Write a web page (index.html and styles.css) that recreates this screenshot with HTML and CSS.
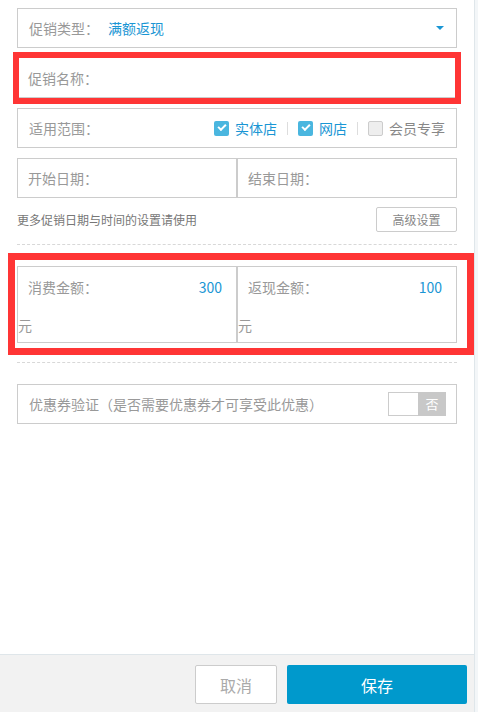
FILE: index.html
```html
<!DOCTYPE html>
<html lang="zh-CN">
<head>
	<meta charset="UTF-8">
	<title>满额返现</title>
	<link rel="stylesheet" href="styles.css">
</head>
<body>
	<div class="panel">
		<div class="form">
			<div class="field select">
				<span class="label">促销类型：</span>
				<span class="value">满额返现</span>
				<i class="caret"></i>
			</div>
			<div class="mark mark-name">
				<div class="field field-in">
					<span class="label">促销名称：</span>
				</div>
			</div>
			<div class="field">
				<span class="label">适用范围：</span>
				<div class="checks">
					<span class="check on"><i class="box"></i>实体店</span>
					<span class="sep"></span>
					<span class="check on"><i class="box"></i>网店</span>
					<span class="sep"></span>
					<span class="check"><i class="box"></i>会员专享</span>
				</div>
			</div>
			<div class="field split">
				<div class="cell"><span class="label">开始日期：</span></div>
				<div class="cell"><span class="label">结束日期：</span></div>
			</div>
			<div class="hint">
				<span>更多促销日期与时间的设置请使用</span>
				<button class="btn-small">高级设置</button>
			</div>
			<div class="dash"></div>
			<div class="mark mark-money">
				<div class="field split money">
					<div class="cell">
						<div class="row"><span class="label">消费金额：</span><span class="num">300</span></div>
						<div class="unit">元</div>
					</div>
					<div class="cell">
						<div class="row"><span class="label">返现金额：</span><span class="num">100</span></div>
						<div class="unit">元</div>
					</div>
				</div>
			</div>
			<div class="dash"></div>
			<div class="field coupon">
				<span class="label">优惠券验证（是否需要优惠券才可享受此优惠）</span>
				<div class="toggle"><span class="knob"></span><span class="off">否</span></div>
			</div>
		</div>
		<div class="footer">
			<button class="btn-cancel">取消</button>
			<button class="btn-save">保存</button>
		</div>
	</div>
</body>
</html>
```

FILE: styles.css
```css
* {
	margin: 0;
	padding: 0;
	box-sizing: border-box;
}
body {
	background-color: #f3f6f8;
	font-family: "Noto Sans CJK SC", "Liberation Sans", sans-serif;
	color: #999;
}
.panel {
	display: flex;
	flex-direction: column;
	width: 475px;
	height: 712px;
	background-color: #fff;
	border-right: 1px solid #dfe6ea;
}
.form {
	flex: 1;
	padding: 8px 17px 0;
}
.field {
	display: flex;
	align-items: center;
	height: 40px;
	margin-bottom: 10px;
	padding: 0 11px;
	border: 1px solid #ccc;
	font-size: 14px;
}
.label {
	color: #999;
	white-space: nowrap;
}
.select .label {
	width: 79px;
}
.select .value {
	flex: 1;
	color: #1a96d4;
}
.caret {
	width: 0;
	height: 0;
	margin-right: 1px;
	border-left: 4px solid transparent;
	border-right: 4px solid transparent;
	border-top: 4px solid #1a96d4;
}

/* 红框标注 */
.mark {
	border: 6px solid #ff3535;
}
.mark-name {
	margin: -6px -4px 4px;
}
.field-in {
	height: 40px;
	margin: 0;
	padding-left: 9px;
	border-width: 0 0 1px;
}
.mark-money {
	margin: 8px -17px 7px -9px;
	padding: 6px 10px 5px 2px;
	border-width: 7px;
}

.checks {
	display: flex;
	align-items: center;
	margin-left: auto;
}
.check {
	display: flex;
	align-items: center;
	color: #1a96d4;
}
.check .box {
	position: relative;
	width: 15px;
	height: 15px;
	margin-right: 6px;
	border-radius: 2px;
	background-color: #4ab6df;
}
.check.on .box::after {
	content: "";
	position: absolute;
	left: 4px;
	top: 3px;
	width: 6px;
	height: 3px;
	border-left: 2px solid #fff;
	border-bottom: 2px solid #fff;
	transform: rotate(-45deg);
}
.check:last-child {
	color: #888;
}
.check:last-child .box {
	border: 1px solid #ccc;
	background-color: #eee;
}
.sep {
	width: 1px;
	height: 13px;
	margin: 0 10px;
	background-color: #ddd;
}

.split {
	padding: 0;
}
.split .cell {
	flex: 1;
	display: flex;
	align-items: center;
	height: 100%;
	padding-left: 10px;
}
.split .cell + .cell {
	border-left: 2px solid #ccc;
}

.hint {
	display: flex;
	align-items: center;
	justify-content: space-between;
	margin-top: -1px;
	font-size: 12px;
	color: #777;
}
.btn-small {
	width: 81px;
	height: 25px;
	border: 1px solid #ccc;
	border-radius: 2px;
	background-color: #fff;
	font-family: inherit;
	font-size: 12px;
	color: #888;
}
.dash {
	margin-top: 12px;
	border-top: 1px dashed #d8d8d8;
}
.mark-money + .dash {
	margin-top: 0;
}

.money {
	height: 77px;
	margin: 0;
}
.money .cell {
	flex-direction: column;
	align-items: stretch;
	padding: 0;
}
.money .row {
	display: flex;
	justify-content: space-between;
	padding: 10px 14px 0 10px;
	line-height: 20px;
}
.money .num {
	color: #1a96d4;
}
.unit {
	margin-top: 18px;
	line-height: 20px;
	color: #999;
}

.coupon {
	margin-top: 21px;
}
.toggle {
	display: flex;
	height: 24px;
	margin-left: auto;
	margin-right: -1px;
}
.knob {
	width: 30px;
	border: 1px solid #ccc;
	border-right: 0;
	background-color: #fff;
}
.off {
	width: 28px;
	line-height: 24px;
	text-align: center;
	font-size: 13px;
	color: #fff;
	background-color: #c8c8c8;
}

.footer {
	display: flex;
	justify-content: flex-end;
	gap: 10px;
	height: 58px;
	padding: 10px 7px 0 0;
	border-top: 1px solid #dfe6ea;
	background-color: #f2f2f2;
}
.footer button {
	height: 39px;
	border-radius: 2px;
	font-family: inherit;
	font-size: 16px;
}
.btn-cancel {
	width: 82px;
	border: 1px solid #ccc;
	background-color: #fff;
	color: #aaa;
}
.btn-save {
	width: 180px;
	border: 0;
	background-color: #0099cc;
	color: #fff;
}
```
